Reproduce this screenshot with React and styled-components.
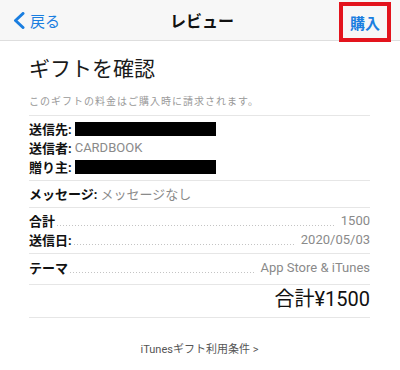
import React from 'react'
import styled, { createGlobalStyle } from 'styled-components'

const GlobalStyle = createGlobalStyle`
  body {
    margin: 0;
    background: #fff;
    font-family: Roboto, "Noto Sans CJK JP", sans-serif;
    color: #111;
  }
`

const NavBar = styled.header`
  height: 40px;
  display: grid;
  grid-template-columns: 1fr auto 1fr;
  align-items: center;
  background: #f7f7f7;
  border-bottom: 1px solid #dedede;
  padding: 0 9px 0 13px;
`

const BackLink = styled.a`
  display: flex;
  align-items: center;
  gap: 5px;
  color: #1a7ee0;
  font-size: 15px;
  text-decoration: none;
`

const Title = styled.h1`
  margin: 0;
  font-size: 16px;
  font-weight: 700;
  color: #111;
`

const BuyButton = styled.button`
  justify-self: end;
  align-self: start;
  margin: 2px 0 -2px;
  width: 52px;
  height: 40px;
  border: 4px solid #e3141d;
  background: transparent;
  color: #1a7ee0;
  font-family: inherit;
  font-size: 15px;
  font-weight: 700;
  padding: 0;
`

const Content = styled.main`
  padding: 0 30px 0 29px;
`

const Heading = styled.h2`
  margin: 13px 0 0;
  font-size: 21px;
  line-height: 30px;
  font-weight: 400;
  color: #1a1a1a;
`

const Note = styled.p`
  margin: 11px 0 0;
  font-size: 10px;
  line-height: 14px;
  letter-spacing: 1px;
  color: #999;
  padding-bottom: 6px;
  border-bottom: 1px solid #e6e6e6;
`

const Section = styled.section`
  padding: ${(p) => p.$pad || '3px 0 4px'};
  border-bottom: 1px solid #e6e6e6;
`

const Row = styled.div`
  display: flex;
  align-items: center;
  height: 19px;
  font-size: 13px;
`

const Label = styled.span`
  font-weight: 700;
  color: #111;
`

const Value = styled.span`
  margin-left: 3px;
  color: #8a8a8a;
`

const Redacted = styled.span`
  margin-left: 3px;
  width: 141px;
  height: 14px;
  background: #000;
`

const Leader = styled.span`
  flex: 1;
  align-self: stretch;
  margin: 0 2px 4px;
  background: linear-gradient(to right, #c4c4c4 1px, transparent 1px) repeat-x left bottom / 3px 1px;
`

const Total = styled.div`
  text-align: right;
  font-size: 20px;
  line-height: 26px;
  padding: 1px 0 5px;
  border-bottom: 1px solid #e6e6e6;
`

const Footer = styled.a`
  display: block;
  margin-top: 24px;
  text-align: center;
  font-size: 11px;
  line-height: 16px;
  color: #555;
  text-decoration: none;
`

const Chevron = () => (
  <svg width="12" height="17" viewBox="0 0 12 17">
    <path d="M10 1.5 L2.5 8.5 L10 15.5" fill="none" stroke="#1a7ee0" strokeWidth="3" strokeLinecap="round" strokeLinejoin="round" />
  </svg>
)

const DotRow = ({ label, value }) => (
  <Row>
    <Label>{label}</Label>
    <Leader />
    <Value>{value}</Value>
  </Row>
)

export default function App() {
  return (
    <>
      <GlobalStyle />
      <NavBar>
        <BackLink href="#">
          <Chevron />
          戻る
        </BackLink>
        <Title>レビュー</Title>
        <BuyButton>購入</BuyButton>
      </NavBar>
      <Content>
        <Heading>ギフトを確認</Heading>
        <Note>このギフトの料金はご購入時に請求されます。</Note>
        <Section>
          <Row><Label>送信先:</Label><Redacted /></Row>
          <Row><Label>送信者:</Label><Value>CARDBOOK</Value></Row>
          <Row><Label>贈り主:</Label><Redacted /></Row>
        </Section>
        <Section>
          <Row><Label>メッセージ:</Label><Value>メッセージなし</Value></Row>
        </Section>
        <Section>
          <DotRow label="合計" value="1500" />
          <DotRow label="送信日:" value="2020/05/03" />
        </Section>
        <Section $pad="4px 0 7px">
          <DotRow label="テーマ" value="App Store & iTunes" />
        </Section>
        <Total>合計¥1500</Total>
        <Footer href="#">iTunesギフト利用条件 &gt;</Footer>
      </Content>
    </>
  )
}
